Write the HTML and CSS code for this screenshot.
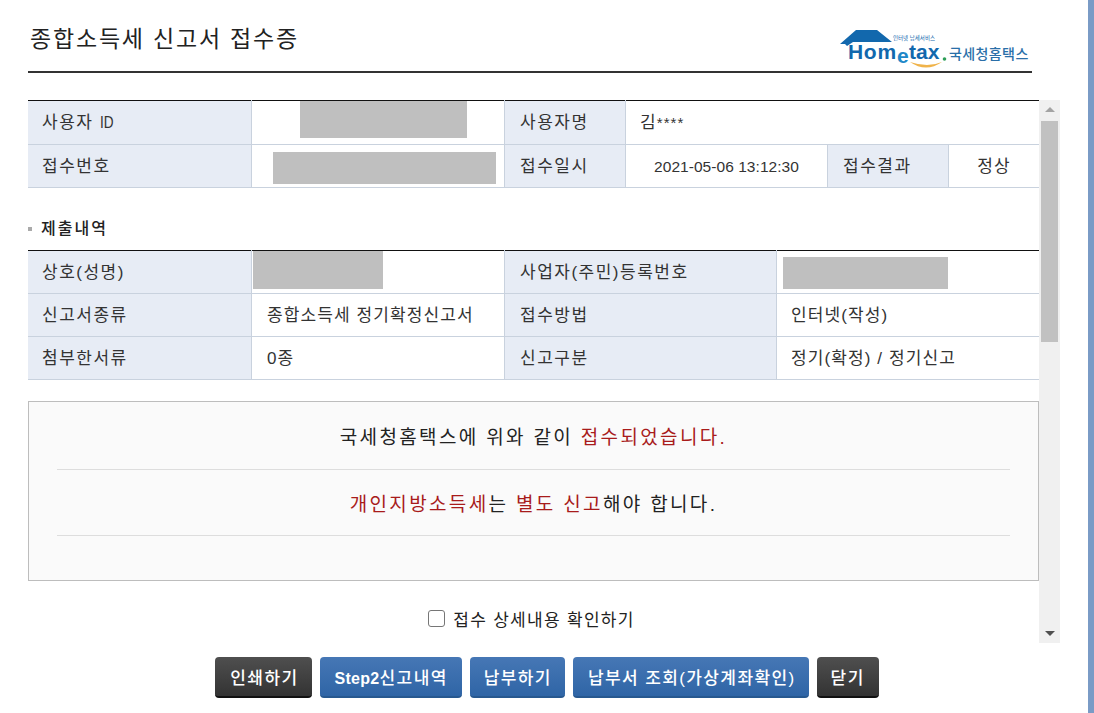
FILE: index.html
```html
<!DOCTYPE html>
<html lang="ko">
<head>
<meta charset="utf-8">
<title>종합소득세 신고서 접수증</title>
<link rel="stylesheet" href="styles.css">
</head>
<body>
<div class="page">
  <main class="main">
    <header class="head">
      <h1 class="title">종합소득세 신고서 접수증</h1>
      <div class="logo">
        <svg class="logo-svg" width="192" height="44" viewBox="0 0 192 44">
          <path d="M0 18 L16 4 L37 4 L52 16 L13 16 L7 20 L5 18 Z" fill="#1268ad"/>
          <path d="M70 36 Q86 47 102 36 Q88 42 70 36 Z" fill="#f0b34a"/>
          <circle cx="104.500" cy="33" r="1.800" fill="#2e9e57"/>
          <text x="8" y="33" class="logo-home wide-home">Hom</text>
          <text x="57" y="37" class="logo-e">e</text>
          <text x="69" y="33" class="logo-home">tax</text>
          <text x="53" y="14" class="logo-small">인터넷 납세서비스</text>
          <text x="109" y="33" class="logo-ko">국세청홈택스</text>
        </svg>
      </div>
    </header>
    <div class="scrollpane">
      <div class="content">
        <table class="grid grid-a">
          <colgroup><col class="c1"><col class="c2"><col class="c3"><col class="c4"><col class="c5"><col class="c6"></colgroup>
          <tr class="first">
            <th>사용자 <span class="small-latin">ID</span></th>
            <td class="redact-cell"><div class="redact r1"></div></td>
            <th>사용자명</th>
            <td colspan="3">김<span class="stars">****</span></td>
          </tr>
          <tr>
            <th>접수번호</th>
            <td class="redact-cell"><div class="redact r2"></div></td>
            <th>접수일시</th>
            <td class="center latin">2021-05-06 13:12:30</td>
            <th>접수결과</th>
            <td class="center">정상</td>
          </tr>
        </table>
        <h2 class="section">제출내역</h2>
        <table class="grid grid-b">
          <colgroup><col class="d1"><col class="d2"><col class="d3"><col class="d4"></colgroup>
          <tr>
            <th>상호(성명)</th>
            <td class="redact-cell"><div class="redact r3"></div></td>
            <th>사업자(주민)등록번호</th>
            <td class="redact-cell"><div class="redact r4"></div></td>
          </tr>
          <tr>
            <th>신고서종류</th>
            <td>종합소득세 정기확정신고서</td>
            <th>접수방법</th>
            <td>인터넷(작성)</td>
          </tr>
          <tr>
            <th>첨부한서류</th>
            <td>0종</td>
            <th>신고구분</th>
            <td>정기(확정) / 정기신고</td>
          </tr>
        </table>
        <section class="notice">
          <p class="msg">국세청홈택스에 위와 같이 <em>접수되었습니다.</em></p>
          <p class="msg"><em>개인지방소득세</em>는 <em>별도 신고</em>해야 합니다.</p>
        </section>
        <label class="check"><input type="checkbox" class="cb"><span>접수 상세내용 확인하기</span></label>
      </div>
      <div class="scrollbar">
        <span class="arrow up"></span>
        <div class="track"><div class="thumb"></div></div>
        <span class="arrow down"></span>
      </div>
    </div>
    <div class="actions">
      <button class="btn dark first-btn" type="button">인쇄하기</button>
      <button class="btn blue" type="button"><span class="btn-latin">Step2</span>신고내역</button>
      <button class="btn blue pay" type="button">납부하기</button>
      <button class="btn blue wide" type="button">납부서 조회(가상계좌확인)</button>
      <button class="btn dark" type="button">닫기</button>
    </div>
  </main>
  <div class="edge"></div>
</div>
</body>
</html>
```
FILE: styles.css
```css
* { box-sizing: border-box; }
html, body { margin: 0; height: 100%; overflow: hidden; background: #fff; }
body { font-family: "Liberation Sans", "Noto Sans CJK KR", sans-serif; color: #333; }
.page { display: flex; height: 713px; width: 1094px; }
.main { width: 1088px; padding-left: 28px; }
.edge { width: 6px; background: #7a9bc6; }

.head { width: 1004px; height: 73px; border-bottom: 2px solid #333; display: flex; justify-content: space-between; align-items: flex-start; }
.title { margin: 24px 0 0 2px; font-size: 23px; font-weight: 400; color: #222; line-height: 30px; letter-spacing: 1.8px; }
.logo { margin: 26px 0 0 0; width: 192px; height: 44px; }
.logo-svg { display: block; }
.logo-home { font-family: "Liberation Sans", sans-serif; font-weight: 700; font-size: 21px; fill: #1268ad; }
.wide-home { letter-spacing: .7px; }
.logo-e { font-family: "Liberation Sans", sans-serif; font-weight: 700; font-size: 21px; fill: #1e88c8; }
.logo-small { font-family: "Noto Sans CJK KR", sans-serif; font-size: 5.500px; fill: #1268ad; }
.logo-ko { font-family: "Noto Sans CJK KR", sans-serif; font-size: 14px; font-weight: 500; fill: #2a6fa8; letter-spacing: .4px; }

.scrollpane { display: flex; width: 1032px; height: 543px; margin-top: 27px; }
.content { width: 1011px; }

.grid { width: 1011px; border-collapse: collapse; table-layout: fixed; border-top: 1px solid #111; font-size: 17px; line-height: 20px; }
.grid th, .grid td { height: 43px; padding: 1px 14px 0; border-bottom: 1px solid #c9d2de; border-left: 1px solid #c9d2de; font-weight: 400; text-align: left; white-space: nowrap; letter-spacing: 1.1px; }
.grid th { letter-spacing: 1.5px; padding-left: 15px; }
.grid .first th, .grid .first td { height: 44px; }
.grid tr > :first-child { border-left: 0; padding-left: 14px; }
.grid th { background: #e7ecf5; color: #333; }
.grid .center { text-align: center; padding: 1px 0 0; }
.grid .redact-cell, .grid .first .redact-cell { padding: 0; vertical-align: top; }
.grid .latin { letter-spacing: .05px; font-size: 15.500px; }
.grid-b td:nth-child(2):not(.redact-cell) { padding-left: 15px; }
.small-latin { display: inline-block; font-size: 17px; letter-spacing: 0; transform: scaleX(.8); transform-origin: left center; }
.stars { font-size: 15px; }
.c1, .d1 { width: 223.5px; }
.c2, .d2 { width: 253px; }
.c3 { width: 121px; }
.c4 { width: 202px; }
.c5 { width: 121px; }
.c6 { width: 90.5px; }
.d3 { width: 272px; }
.d4 { width: 262.5px; }

.redact { background: #bfbfbf; }
.r1 { width: 167px; height: 37px; margin-left: 48px; }
.r2 { width: 223px; height: 32px; margin: 7px 0 0 21px; }
.r3 { width: 130px; height: 38px; margin-left: 1px; }
.r4 { width: 165px; height: 32px; margin: 6px 0 0 6px; }

.section { margin: 31px 0 12px; height: 19px; padding-left: 13px; font-size: 16px; line-height: 19px; font-weight: 500; color: #222; position: relative; letter-spacing: 2px; }
.section::before { content: ""; position: absolute; left: 0; top: 8px; width: 4px; height: 4px; background: #aaa; }

.notice { margin-top: 21px; height: 180px; border: 1px solid #bdbdbd; background: #fafafa; padding: 0 28px; }
.msg { margin: 0; height: 66px; display: flex; align-items: center; justify-content: center; white-space: pre-wrap; border-bottom: 1px solid #ddd; font-size: 19px; color: #222; letter-spacing: 2.35px; }
.msg:first-child { height: 68px; }
.msg em { font-style: normal; color: #a81b1b; }

.check { display: flex; justify-content: center; align-items: center; gap: 8px; margin-top: 25px; padding-right: 4px; height: 24px; font-size: 17px; color: #222; letter-spacing: 1.3px; }
.cb { appearance: none; margin: 0; width: 17px; height: 17px; border: 1px solid #767676; border-radius: 3px; background: #fff; }

.scrollbar { width: 21px; background: #f0f0f0; display: flex; flex-direction: column; align-items: center; }
.arrow { width: 0; height: 0; border-left: 5px solid transparent; border-right: 5px solid transparent; flex: none; }
.arrow.up { margin: 7px 0 7px; border-bottom: 5px solid #a3a3a3; }
.arrow.down { margin: 7px 0 7px; border-top: 5px solid #505050; }
.track { flex: 1; width: 100%; padding: 2px 2px 0; }
.thumb { height: 221px; background: #c1c1c1; }

.actions { display: flex; justify-content: center; gap: 8px; width: 1038px; margin-top: 14px; }
.btn { height: 41px; padding: 0 14px; border: 0; border-radius: 4px; font: 500 17px "Liberation Sans", "Noto Sans CJK KR", sans-serif; color: #fff; white-space: nowrap; letter-spacing: 1.4px; }
.first-btn { padding: 0 14px 0 15px; }
.pay { padding: 0 13px 0 14px; }
.btn-latin { font-weight: 700; font-size: 16px; letter-spacing: .3px; }
.wide { padding: 0 13px 0 15px; }
.dark { background: linear-gradient(#4f4f4f, #333); border-bottom: 2px solid #111; }
.blue { background: linear-gradient(#4677b5, #2f65a6); border-bottom: 2px solid #27588f; }
```
